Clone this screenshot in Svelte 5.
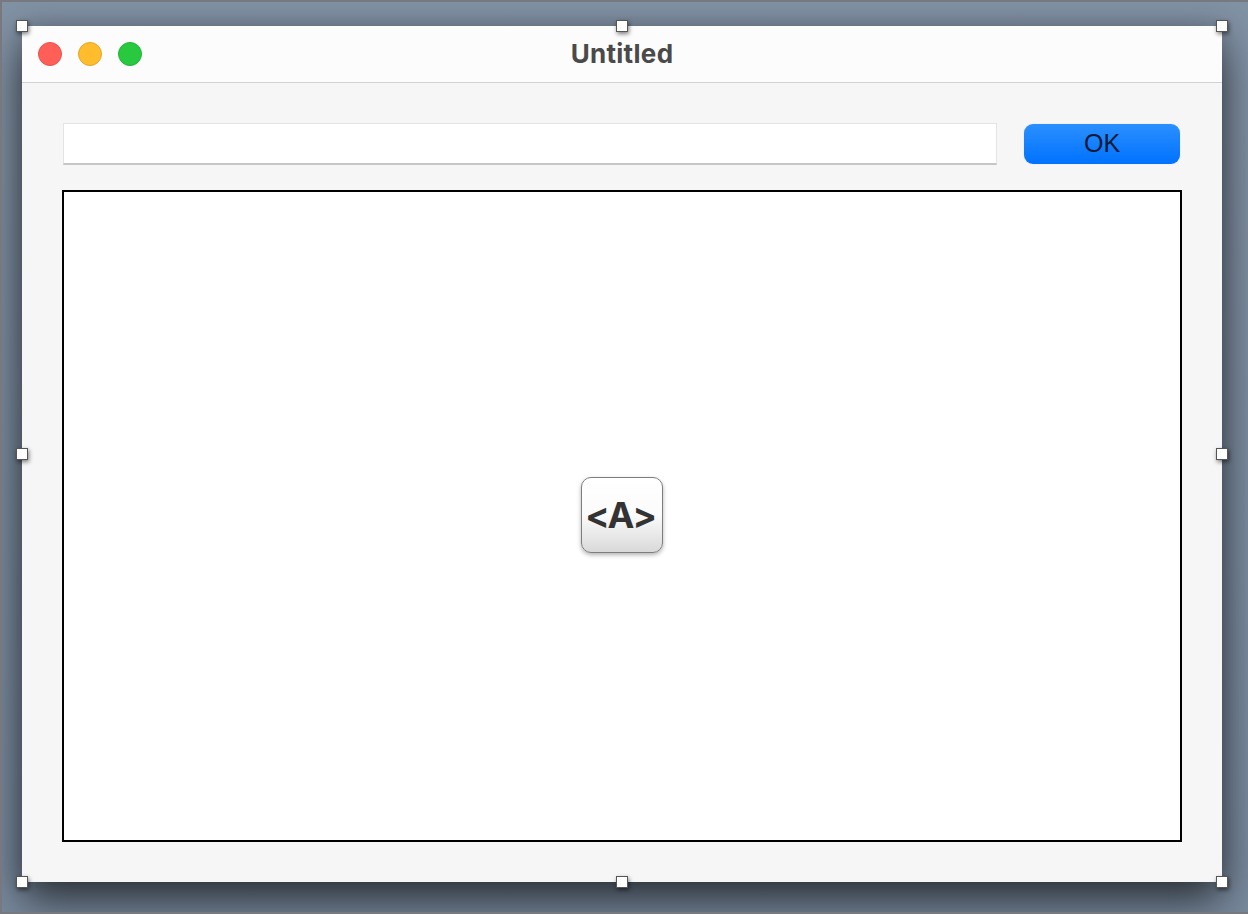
<script>
  const handles = ['tl', 'tc', 'tr', 'ml', 'mr', 'bl', 'bc', 'br'];
  const lights = ['close', 'min', 'max'];
  let title = $state('Untitled');
  let value = $state('');
</script>

<div class="stage">
  <div class="window">
    <header class="titlebar">
      <div class="lights">
        {#each lights as light}
          <span class="light {light}"></span>
        {/each}
      </div>
      <h1>{title}</h1>
    </header>

    <main class="content">
      <div class="toolbar">
        <input type="text" bind:value aria-label="Text" />
        <button type="button">OK</button>
      </div>
      <div class="canvas">
        <div class="tag">&lt;A&gt;</div>
      </div>
    </main>

    {#each handles as handle}
      <span class="handle {handle}"></span>
    {/each}
  </div>
</div>

<style>
  :global(body) {
    margin: 0;
    font-family: Inter, "Liberation Sans", sans-serif;
  }

  .stage {
    box-sizing: border-box;
    width: 1248px;
    height: 914px;
    padding: 24px 26px 30px 20px;
    overflow: hidden;
    background: linear-gradient(180deg, #8292a5 0%, #7a8b9f 100%);
    border: solid #77797e;
    border-width: 2px 0 2px 2px;
  }

  .window {
    position: relative;
    display: flex;
    flex-direction: column;
    width: 1200px;
    height: 856px;
    background: #f6f6f6;
    box-shadow: 0 20px 42px rgba(0, 0, 0, 0.62), 0 0 22px rgba(0, 0, 0, 0.18);
  }

  .titlebar {
    position: relative;
    flex: none;
    display: flex;
    align-items: center;
    justify-content: center;
    box-sizing: border-box;
    height: 57px;
    padding-bottom: 2px;
    background: #fcfcfc;
    border-bottom: 1px solid #d2d2d2;
  }

  .lights {
    position: absolute;
    left: 16px;
    top: 16px;
    display: flex;
    gap: 16px;
  }

  .light {
    box-sizing: border-box;
    width: 24px;
    height: 24px;
    border-radius: 50%;
    border: 1px solid transparent;
  }

  .close {
    background: #ff5f57;
    border-color: #e5534c;
  }

  .min {
    background: #ffbd2e;
    border-color: #e5a526;
  }

  .max {
    background: #28c93f;
    border-color: #22b236;
  }

  h1 {
    margin: 0;
    font-size: 26px;
    font-weight: 700;
    letter-spacing: 0.3px;
    color: #4a4a4a;
  }

  .content {
    flex: 1;
    display: flex;
    flex-direction: column;
    gap: 25px;
    padding: 40px;
    min-height: 0;
  }

  .toolbar {
    display: flex;
    align-items: flex-start;
    gap: 27px;
    padding: 0 2px 0 1px;
  }

  input {
    box-sizing: border-box;
    width: 934px;
    height: 42px;
    padding: 0 8px;
    background: #fff;
    border: 1px solid #e4e4e4;
    border-bottom: 2px solid #c6c6c6;
    border-radius: 0;
    outline: none;
  }

  button {
    width: 156px;
    height: 40px;
    margin-top: 1px;
    padding: 0 0 2px;
    font-family: "Liberation Sans", Arial, sans-serif;
    font-size: 25px;
    color: #061a38;
    background: linear-gradient(180deg, #2b8fff 0%, #0072ff 100%);
    border: none;
    border-radius: 9px;
    box-shadow: 0 0 1px rgba(0, 90, 220, 0.3);
  }

  .canvas {
    flex: 1;
    display: flex;
    align-items: center;
    justify-content: center;
    box-sizing: border-box;
    background: #fff;
    border: 2px solid #000;
  }

  .tag {
    display: flex;
    align-items: center;
    justify-content: center;
    box-sizing: border-box;
    width: 82px;
    height: 76px;
    margin-bottom: 2px;
    padding-right: 4px;
    font-size: 36px;
    font-weight: 700;
    letter-spacing: -2px;
    color: #333;
    background: linear-gradient(180deg, #fff 0%, #fbfbfb 50%, #d9d9d9 100%);
    border: 1px solid #7d7d7d;
    border-radius: 10px;
    box-shadow: 0 2px 4px rgba(0, 0, 0, 0.3);
  }

  .handle {
    position: absolute;
    box-sizing: border-box;
    width: 12px;
    height: 12px;
    margin: -6px 0 0 -6px;
    background: #fff;
    border: 1px solid #555;
    box-shadow: 1px 2px 4px rgba(0, 0, 0, 0.5);
  }

  .tl { left: 0; top: 0; }
  .tc { left: 50%; top: 0; }
  .tr { left: 100%; top: 0; }
  .ml { left: 0; top: 50%; }
  .mr { left: 100%; top: 50%; }
  .bl { left: 0; top: 100%; }
  .bc { left: 50%; top: 100%; }
  .br { left: 100%; top: 100%; }
</style>
